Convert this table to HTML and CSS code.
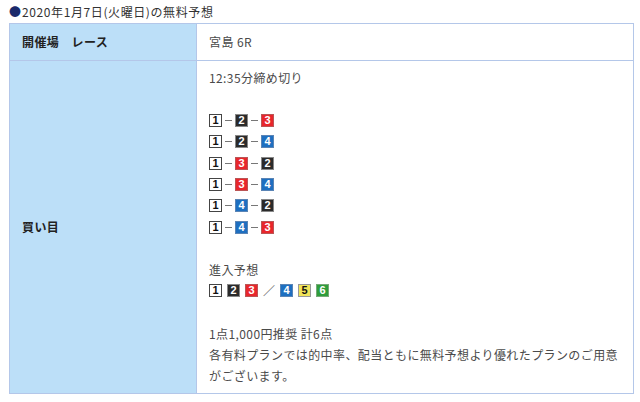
FILE: index.html
```html
<!DOCTYPE html>
<html lang="ja">
<head>
<meta charset="utf-8">
<link rel="stylesheet" href="styles.css">
</head>
<body>
<div class="wrap">
  <div class="title"><span class="dot">●</span>2020年1月7日(火曜日)の無料予想</div>
  <table class="yoso">
    <tr class="r1">
      <th>開催場　レース</th>
      <td>宮島 6R</td>
    </tr>
    <tr class="r2">
      <th>買い目</th>
      <td>
        <div class="line">12:35分締め切り</div>
        <div class="line"></div>
        <div class="line combo"><span class="b b1">1</span><span class="dash"></span><span class="b b2">2</span><span class="dash"></span><span class="b b3">3</span></div>
        <div class="line combo"><span class="b b1">1</span><span class="dash"></span><span class="b b2">2</span><span class="dash"></span><span class="b b4">4</span></div>
        <div class="line combo"><span class="b b1">1</span><span class="dash"></span><span class="b b3">3</span><span class="dash"></span><span class="b b2">2</span></div>
        <div class="line combo"><span class="b b1">1</span><span class="dash"></span><span class="b b3">3</span><span class="dash"></span><span class="b b4">4</span></div>
        <div class="line combo"><span class="b b1">1</span><span class="dash"></span><span class="b b4">4</span><span class="dash"></span><span class="b b2">2</span></div>
        <div class="line combo"><span class="b b1">1</span><span class="dash"></span><span class="b b4">4</span><span class="dash"></span><span class="b b3">3</span></div>
        <div class="line"></div>
        <div class="line">進入予想</div>
        <div class="line entry"><span class="b b1">1</span><span class="b b2">2</span><span class="b b3">3</span><span class="slash">／</span><span class="b b4">4</span><span class="b b5">5</span><span class="b b6">6</span></div>
        <div class="line"></div>
        <div class="line">1点1,000円推奨 計6点</div>
        <div class="para">各有料プランでは的中率、配当ともに無料予想より優れたプランのご用意がございます。</div>
      </td>
    </tr>
  </table>
</div>
</body>
</html>
```

FILE: styles.css
```css
html, body {
  margin: 0;
  padding: 0;
  background: #fff;
}
body {
  font-family: "Noto Sans CJK JP", "Noto Sans", sans-serif;
  color: #444;
  font-size: 12px;
}
.wrap {
  padding: 3px 6px 0 9px;
}
.title {
  font-size: 12px;
  line-height: 18px;
  letter-spacing: 0.6px;
  color: #333;
  margin-bottom: 2px;
}
.dot {
  color: #1b2a6b;
  letter-spacing: 0;
  margin-right: 1px;
}
.yoso {
  width: 625px;
  border-collapse: collapse;
  table-layout: fixed;
}
.yoso th, .yoso td {
  border: 1px solid #b4c7e9;
  font-size: 12px;
  letter-spacing: 0.4px;
  line-height: 21.3px;
  text-align: left;
}
.yoso th {
  width: 162px;
  background: #bcdff8;
  color: #222;
  font-weight: bold;
  padding: 7px 12px;
  vertical-align: middle;
}
.yoso td {
  padding: 6px 10px 6px 12px;
  vertical-align: top;
  color: #4a4a4a;
}
.r1 th, .r1 td {
  padding: 7px 12px 8px;
}
.line {
  height: 21.3px;
  display: flex;
  align-items: center;
}
.b {
  display: inline-block;
  width: 11px;
  height: 11px;
  line-height: 11px;
  border: 1px solid #777;
  text-align: center;
  font-family: "Liberation Sans", Arial, sans-serif;
  font-weight: bold;
  font-size: 11px;
  letter-spacing: 0;
}
.b1 { background: #fff; color: #111; border-color: #444; }
.b2 { background: #2b2b2b; color: #fff; border-color: #888; }
.b3 { background: #e8262c; color: #fff; border-color: #b55; }
.b4 { background: #1e6fc0; color: #fff; border-color: #5a84b5; }
.b5 { background: #f1e45a; color: #111; border-color: #999; }
.b6 { background: #2f9d3c; color: #fff; border-color: #7a7; }
.dash {
  display: inline-block;
  width: 7px;
  height: 1px;
  background: #777;
  margin: 0 3px;
}
.entry .b { margin-right: 5px; }
.entry .b3 { margin-right: 0; }
.slash {
  display: inline-block;
  width: 22px;
  text-align: center;
  color: #666;
  letter-spacing: 0;
  font-size: 12px;
}
.para {
  line-height: 21.3px;
}
```
